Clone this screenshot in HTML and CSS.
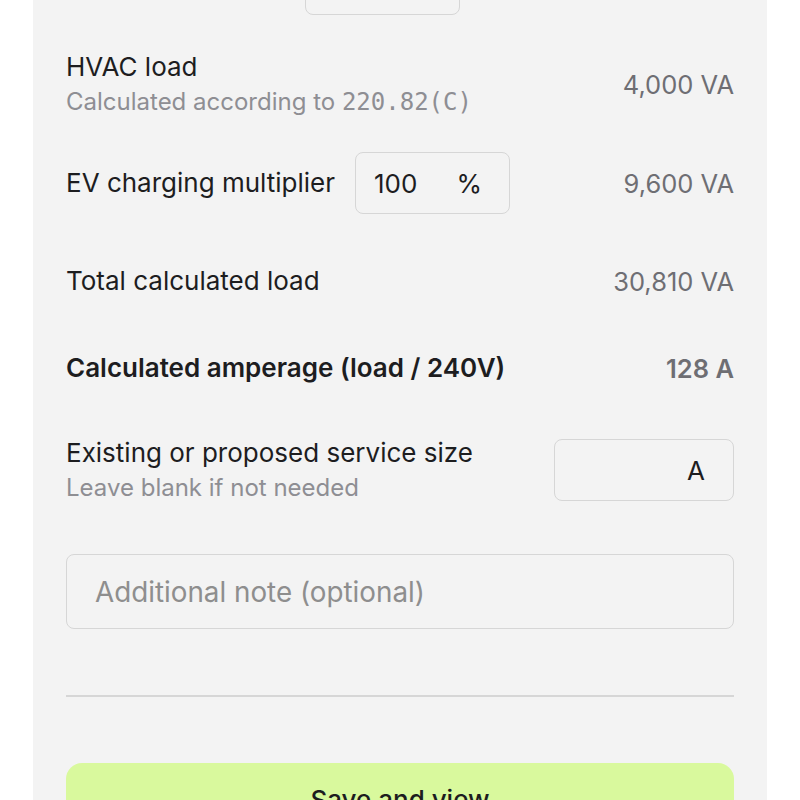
FILE: index.html
```html
<!DOCTYPE html>
<html lang="en">
<head>
<meta charset="utf-8">
<title>Load calculation</title>
<link rel="stylesheet" href="styles.css">
</head>
<body>
<main class="panel">
  <div class="row row-first" aria-hidden="true">
    <span class="label-spacer"></span>
    <div class="field field-unit"></div>
  </div>

  <div class="row row-hvac">
    <div class="label-block">
      <span class="label">HVAC load</span>
      <span class="sub">Calculated according to <code class="code">220.82(C)</code></span>
    </div>
    <span class="value">4,000 VA</span>
  </div>

  <div class="row row-ev">
    <span class="label">EV charging multiplier</span>
    <div class="field field-unit"><span class="field-value">100</span><span class="field-unit-text">%</span></div>
    <span class="value">9,600 VA</span>
  </div>

  <div class="row row-total">
    <span class="label">Total calculated load</span>
    <span class="value">30,810 VA</span>
  </div>

  <div class="row row-amp">
    <span class="label strong">Calculated amperage (load / 240V)</span>
    <span class="value strong">128 A</span>
  </div>

  <div class="row row-service">
    <div class="label-block">
      <span class="label">Existing or proposed service size</span>
      <span class="sub">Leave blank if not needed</span>
    </div>
    <div class="field field-service"><span class="field-unit-text">A</span></div>
  </div>

  <div class="note">Additional note (optional)</div>

  <hr class="divider">

  <button class="btn" type="button">Save and view</button>
</main>
</body>
</html>
```

FILE: styles.css
```css
html, body {
  margin: 0;
  padding: 0;
  background: #ffffff;
}

body {
  font-family: "Inter", "Noto Sans", sans-serif;
  color: #1d1d1f;
  overflow: hidden;
}

.panel {
  width: 734px;
  margin: -47px 0 0 33px;
  box-sizing: border-box;
  padding: 0 33px 40px 33px;
  background: #f3f3f3;
  display: flex;
  flex-direction: column;
}

.row {
  display: flex;
  align-items: center;
  min-height: 62px;
}

.label-spacer {
  width: 219px;
}

.row-hvac { margin-top: 34px; }
.row-ev { margin-top: 33px; }
.row-total { margin-top: 36px; }
.row-amp { margin-top: 25px; }
.row-service { margin-top: 36px; }

.label {
  font-size: 26px;
  line-height: 36px;
  color: #1d1d1f;
}

.label-block {
  display: flex;
  flex-direction: column;
  flex: 1;
}

.sub {
  font-size: 24px;
  line-height: 34px;
  color: #8e8e93;
}

.code {
  font-family: "DejaVu Sans Mono", "Liberation Mono", monospace;
  font-size: 24px;
  color: #8e8e93;
}

.value {
  margin-left: auto;
  font-size: 25.5px;
  color: #6e6e73;
}

.strong {
  font-weight: 600;
}

.field {
  box-sizing: border-box;
  height: 62px;
  border: 1.5px solid #d6d6d6;
  border-radius: 8px;
  display: flex;
  align-items: center;
  font-size: 26px;
  color: #1d1d1f;
}

.field-unit {
  width: 155px;
  margin-left: 20px;
  padding: 0 27px 0 18px;
}

.field-value {
  flex: 1;
}

.field-service {
  width: 180px;
  justify-content: flex-end;
  padding: 0 28px;
}

.note {
  margin-top: 49px;
  box-sizing: border-box;
  height: 75px;
  border: 1.5px solid #d6d6d6;
  border-radius: 8px;
  padding: 0 28px;
  display: flex;
  align-items: center;
  font-size: 27.8px;
  color: #8e8e8e;
}

.divider {
  margin: 66px 0 0 0;
  border: none;
  border-top: 2px solid #d6d6d6;
  height: 0;
}

.btn {
  margin-top: 66px;
  height: 72px;
  border: none;
  border-radius: 16px;
  background: #d9f99d;
  font-family: "Inter", "Noto Sans", sans-serif;
  font-size: 26px;
  font-weight: 500;
  color: #1d1d1f;
}
```
